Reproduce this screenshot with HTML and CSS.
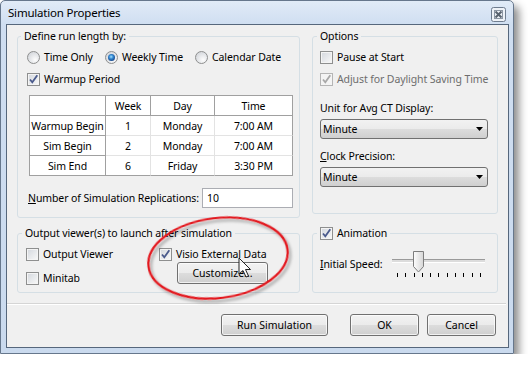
FILE: index.html
```html
<!DOCTYPE html>
<html>

<head>
    <title>Simulation Properties</title>
    <link rel="stylesheet" href="styles.css">
</head>

<body>
    <div class="window">
        <div class="titlebar">
            <span class="title">Simulation Properties</span>
            <span class="close-btn">
                <svg viewBox="0 0 15 15" width="15" height="15">
                    <rect x="0.5" y="0.5" width="14" height="14" rx="2" fill="#eef2f7" stroke="#6f7d8f"/>
                    <path d="M4.5 4.5 L10.5 10.5 M10.5 4.5 L4.5 10.5" stroke="#59636f" stroke-width="2"/>
                    <rect x="3.5" y="3.5" width="8" height="8" fill="none" stroke="#8c96a3" stroke-width="1"/>
                </svg>
            </span>
        </div>

        <div class="client">
            <div class="groups">
                <!-- Run length -->
                <fieldset class="group run-length">
                    <legend>Define run length by:</legend>
                    <div class="radio-row">
                        <label class="option"><span class="radio"></span>Time Only</label>
                        <label class="option"><span class="radio selected"></span>Weekly Time</label>
                        <label class="option"><span class="radio"></span>Calendar Date</label>
                    </div>
                    <div class="check-row">
                        <label class="option">
                            <span class="check"><svg viewBox="0 0 11 11"><path d="M2 5.5 L4.3 8.3 L9.3 1.3"/></svg></span>Warmup Period
                        </label>
                    </div>

                    <table class="run-table">
                        <tr>
                            <th class="col-name"></th>
                            <th class="col-week">Week</th>
                            <th class="col-day">Day</th>
                            <th class="col-time">Time</th>
                        </tr>
                        <tr>
                            <th>Warmup Begin</th>
                            <td>1</td>
                            <td>Monday</td>
                            <td>7:00 AM</td>
                        </tr>
                        <tr>
                            <th>Sim Begin</th>
                            <td>2</td>
                            <td>Monday</td>
                            <td>7:00 AM</td>
                        </tr>
                        <tr>
                            <th>Sim End</th>
                            <td>6</td>
                            <td>Friday</td>
                            <td>3:30 PM</td>
                        </tr>
                    </table>

                    <div class="replications">
                        <label for="reps"><u>N</u>umber of Simulation Replications:</label>
                        <input type="text" id="reps" class="textbox" value="10">
                    </div>
                </fieldset>

                <!-- Options -->
                <fieldset class="group options">
                    <legend>Options</legend>
                    <div class="check-row">
                        <label class="option"><span class="check"></span>Pause at Start</label>
                    </div>
                    <div class="check-row">
                        <label class="option disabled">
                            <span class="check"><svg viewBox="0 0 11 11"><path d="M2 5.5 L4.3 8.3 L9.3 1.3"/></svg></span>Adjust for Daylight Saving Time
                        </label>
                    </div>
                    <div class="field-label unit-label">Unit for Avg CT Display:</div>
                    <div class="combo">
                        <span>Minute</span>
                        <svg viewBox="0 0 7 4" width="7" height="4"><path d="M0 0 H7 L3.5 4 Z" fill="#000"/></svg>
                    </div>
                    <div class="field-label"><u>C</u>lock Precision:</div>
                    <div class="combo">
                        <span>Minute</span>
                        <svg viewBox="0 0 7 4" width="7" height="4"><path d="M0 0 H7 L3.5 4 Z" fill="#000"/></svg>
                    </div>
                </fieldset>

                <!-- Output viewers -->
                <fieldset class="group viewers">
                    <legend>Output viewer(s) to launch after simulation</legend>
                    <div class="viewer-cols">
                        <div class="viewer-col first">
                            <label class="option"><span class="check"></span>Output Viewer</label>
                            <label class="option"><span class="check"></span>Minitab</label>
                        </div>
                        <div class="viewer-col">
                            <label class="option">
                                <span class="check"><svg viewBox="0 0 11 11"><path d="M2 5.5 L4.3 8.3 L9.3 1.3"/></svg></span>Visio External Data
                            </label>
                            <button class="btn customize">Customize...</button>
                        </div>
                    </div>
                </fieldset>

                <!-- Animation -->
                <fieldset class="group animation">
                    <legend>
                        <label class="option">
                            <span class="check"><svg viewBox="0 0 11 11"><path d="M2 5.5 L4.3 8.3 L9.3 1.3"/></svg></span>Animation
                        </label>
                    </legend>
                    <div class="speed-row">
                        <span><u>I</u>nitial Speed:</span>
                        <div class="slider">
                            <div class="slider-track"></div>
                            <svg class="slider-thumb" viewBox="0 0 11 22" width="11" height="22">
                                <defs>
                                    <linearGradient id="thumbFill" x1="0" x2="1" y1="0" y2="0">
                                        <stop offset="0" stop-color="#fdfdfd"/>
                                        <stop offset="1" stop-color="#d6d6d6"/>
                                    </linearGradient>
                                </defs>
                                <path d="M0.5 0.5 H10.5 V15.5 L5.5 21 L0.5 15.5 Z" fill="url(#thumbFill)" stroke="#7d7d7d"/>
                            </svg>
                            <div class="slider-ticks">
                                <i></i><i></i><i></i><i></i><i></i><i></i><i></i><i></i><i></i><i></i><i></i>
                            </div>
                        </div>
                    </div>
                </fieldset>
            </div>

            <div class="separator"></div>

            <div class="buttons">
                <button class="btn run">Run Simulation</button>
                <button class="btn ok">OK</button>
                <button class="btn cancel">Cancel</button>
            </div>
        </div>

        <!-- Annotation drawn over the dialog -->
        <svg class="overlay" viewBox="0 0 528 368" width="528" height="368">
            <defs>
                <filter id="soft" x="-20%" y="-20%" width="140%" height="140%">
                    <feDropShadow dx="2" dy="3" stdDeviation="1.6" flood-color="#000" flood-opacity="0.35"/>
                </filter>
            </defs>
            <ellipse cx="218" cy="258" rx="70" ry="40" transform="rotate(-7 218 258)"
                fill="none" stroke="#e3141b" stroke-width="2.2" filter="url(#soft)"/>
            <path d="M0 0 L0 16 L4 12.5 L7 19 L9.5 18 L6.5 11.5 L11.5 11.5 Z" transform="translate(239 258)"
                fill="#fff" fill-opacity="0.85" stroke="#222" stroke-width="1" stroke-linejoin="round"/>
        </svg>
    </div>
</body>

</html>
```

FILE: styles.css
```css
* {
    box-sizing: border-box;
}

body {
    margin: 0;
    background-color: #ffffff;
    font-family: "Noto Sans", "Open Sans", sans-serif;
    font-size: 10.5px;
    letter-spacing: -0.1px;
    color: #000000;
}

/* Window frame */
.window {
    position: relative;
    width: 514px;
    height: 354px;
    padding: 0 4px 5px 5px;
    border: 1px solid #66778c;
    border-radius: 5px 5px 0 0;
    background: linear-gradient(#e1ebf7, #cfdef1 24px, #cadaee);
    box-shadow: 5px 6px 9px rgba(0, 0, 0, 0.45);
}

.titlebar {
    height: 23px;
    display: flex;
    align-items: center;
    justify-content: space-between;
    padding-left: 2px;
}

.title {
    font-size: 11.5px;
    letter-spacing: -0.2px;
}

.close-btn {
    display: flex;
    margin-right: 3px;
    margin-top: 3px;
}

.client {
    height: 324px;
    border: 1px solid #56677c;
    background-color: #f0f0f0;
}

/* Group boxes */
.groups {
    display: grid;
    grid-template-columns: 283px 186px;
    column-gap: 12px;
    row-gap: 8px;
    align-items: start;
    padding: 4px 0 0 10px;
}

.group {
    margin: 0;
    min-width: 0;
    border: 1px solid #d5dfe5;
    border-radius: 3px;
}

.group legend {
    padding: 0 3px;
    line-height: 14px;
}

.run-length {
    height: 189px;
    padding: 0 6px 0 9px;
}

.run-length legend {
    margin-left: -6px;
}

.options {
    height: 185px;
    padding: 0 9px 0 7px;
}

.options legend,
.animation legend {
    margin-left: -3px;
}

.viewers {
    height: 67px;
    padding: 0 6px 0 8px;
}

.viewers legend {
    margin-left: -4px;
}

.animation {
    height: 67px;
    padding: 0 10px 0 7px;
}

/* Radios and checkboxes */
.option {
    display: inline-flex;
    align-items: center;
    gap: 4px;
    white-space: nowrap;
}

.option.disabled {
    color: #6d6d6d;
}

.radio-row {
    display: grid;
    grid-template-columns: 78px 90px auto;
    height: 16px;
    margin-top: 6px;
    align-items: center;
}

.radio {
    display: inline-flex;
    align-items: center;
    justify-content: center;
    width: 13px;
    height: 13px;
    border: 1px solid #8e8f8f;
    border-radius: 50%;
    background: radial-gradient(circle at 65% 70%, #fdfdfd, #d2d5da 85%);
}

.radio.selected::after {
    content: "";
    width: 7px;
    height: 7px;
    border-radius: 50%;
    background: radial-gradient(circle at 45% 40%, #a6e3ff 0, #3489d2 2px, #1a4c90 4px);
}

.check-row {
    display: flex;
    align-items: center;
    height: 16px;
    margin-top: 6px;
}

.check {
    display: inline-flex;
    flex-shrink: 0;
    width: 13px;
    height: 13px;
    border: 1px solid #8e8f8f;
    background: linear-gradient(135deg, #d3d7dd, #f9f9f9);
    box-shadow: inset 0 0 0 1px #f4f4f4;
}

.check svg {
    width: 11px;
    height: 11px;
}

.check path {
    fill: none;
    stroke: #4a5a8c;
    stroke-width: 1.8;
}

.disabled .check {
    border-color: #b5b5b5;
    background: #f4f4f4;
}

.disabled .check path {
    stroke: #a8a8a8;
}

/* Run length table */
.run-table {
    width: 264px;
    margin: 8px 0 0 2px;
    table-layout: fixed;
    border-collapse: separate;
    border-spacing: 0;
    border-top: 1px solid #a0a0a0;
    border-left: 1px solid #a0a0a0;
    background-color: #ffffff;
}

.run-table tr {
    height: 20px;
}

.run-table th,
.run-table td {
    padding: 0;
    font-weight: normal;
    text-align: center;
    white-space: nowrap;
    border-right: 1px solid #e3e3e3;
    border-bottom: 1px solid #e3e3e3;
}

.run-table th {
    border-color: #a0a0a0;
}

.run-table td:last-child {
    border-right-color: #a0a0a0;
}

.run-table tr:last-child td {
    border-bottom-color: #a0a0a0;
}

.col-name { width: 76px; }
.col-week { width: 45px; }
.col-day { width: 64px; }
.col-time { width: 78px; }

.replications {
    display: flex;
    align-items: center;
    justify-content: space-between;
    height: 21px;
    margin-top: 11px;
    padding-left: 1px;
    white-space: nowrap;
}

.textbox {
    width: 91px;
    height: 20px;
    padding: 0 4px;
    border: 1px solid #abadb3;
    background-color: #ffffff;
    font: inherit;
}

/* Options */
.field-label {
    line-height: 14px;
    margin-top: 10px;
}

.unit-label {
    margin-top: 14px;
}

.combo {
    display: flex;
    align-items: center;
    justify-content: space-between;
    width: 168px;
    height: 20px;
    margin-top: 4px;
    padding: 0 4px 0 2px;
    border: 1px solid #707070;
    border-radius: 3px;
    background: linear-gradient(#f2f2f2, #ebebeb 50%, #dddddd 50%, #cfcfcf);
}

/* Buttons */
.btn {
    height: 22px;
    padding: 0;
    border: 1px solid #707070;
    border-radius: 3px;
    background: linear-gradient(#f2f2f2, #ebebeb 50%, #dddddd 50%, #cfcfcf);
    box-shadow: inset 0 0 0 1px rgba(255, 255, 255, 0.7);
    font: inherit;
    color: #000000;
}

.viewer-cols {
    display: flex;
    margin-top: 6px;
}

.viewer-col {
    display: flex;
    flex-direction: column;
    align-items: flex-start;
}

.viewer-col.first {
    width: 133px;
    gap: 8px;
}

.viewer-col .option {
    height: 16px;
}

.customize {
    width: 91px;
    margin-left: 18px;
}

/* Animation slider */
.speed-row {
    display: flex;
    align-items: center;
    height: 28px;
    margin-top: 8px;
}

.slider {
    position: relative;
    width: 96px;
    height: 28px;
    margin-left: auto;
}

.slider-track {
    position: absolute;
    left: 1px;
    top: 9px;
    width: 93px;
    height: 4px;
    border-top: 1px solid #9a9a9a;
    border-bottom: 1px solid #ffffff;
    background-color: #dcdcdc;
}

.slider-thumb {
    position: absolute;
    left: 22px;
    top: 1px;
}

.slider-ticks {
    position: absolute;
    left: 6px;
    top: 23px;
    width: 84px;
    display: flex;
    justify-content: space-between;
}

.slider-ticks i {
    width: 1px;
    height: 4px;
    background-color: #000000;
}

/* Bottom row */
.separator {
    height: 2px;
    margin: 10px 2px 0 0;
    border-top: 1px solid #d5d5d5;
    border-bottom: 1px solid #ffffff;
}

.buttons {
    display: flex;
    justify-content: flex-end;
    margin-top: 9px;
    padding-right: 12px;
}

.run {
    width: 107px;
    margin-right: 22px;
}

.ok {
    width: 69px;
    margin-right: 8px;
}

.cancel {
    width: 69px;
}

.overlay {
    position: absolute;
    left: -1px;
    top: -1px;
    pointer-events: none;
}
```
